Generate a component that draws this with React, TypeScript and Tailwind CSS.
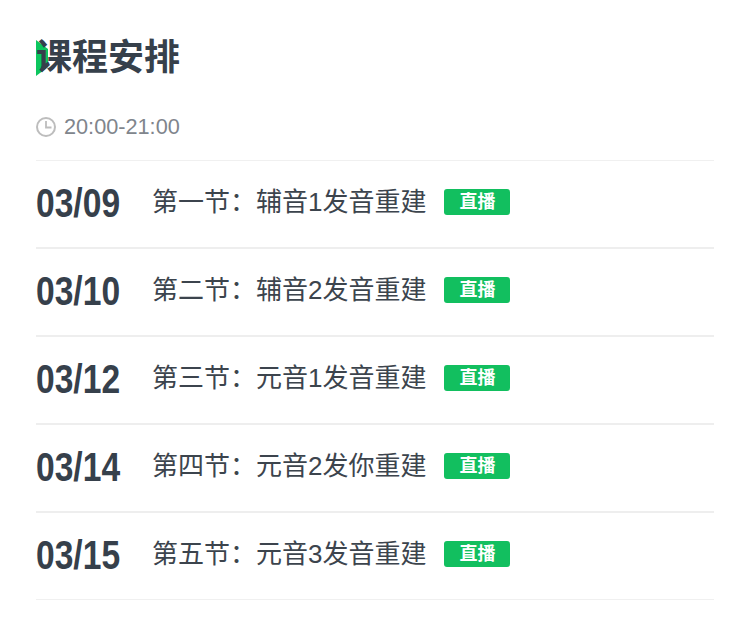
const rows = [
  ["03/09", "第一节：辅音1发音重建"],
  ["03/10", "第二节：辅音2发音重建"],
  ["03/12", "第三节：元音1发音重建"],
  ["03/14", "第四节：元音2发你重建"],
  ["03/15", "第五节：元音3发音重建"],
];
const font = { fontFamily: '"Liberation Sans", "Noto Sans CJK SC", sans-serif' };
export default function App() {
  return (
    <div className="w-[750px] h-[640px] bg-white pl-9 pr-9 pt-10 text-[#36404b]" style={font}>
      <div className="relative h-9 flex items-center">
        <svg className="absolute left-0 top-0" width="12" height="36" viewBox="0 0 12 36">
          <path d="M0 0 L12 9 V27 L0 36 Z" fill="#0cc65e" />
        </svg>
        <h1 className="relative text-[36px] leading-9 font-bold">课程安排</h1>
      </div>
      <div className="mt-[34px] h-[34px] flex items-center gap-2 text-[21.7px] text-[#80858c]">
        <svg width="20" height="20" viewBox="0 0 20 20" fill="none" stroke="#bdbdbd" strokeWidth="2">
          <circle cx="10" cy="10" r="9" />
          <path d="M10 4 V10.5 H15.5" strokeWidth="1.8" />
        </svg>
        <span>20:00-21:00</span>
      </div>
      <div className="border-t border-[#f0f0f0] mt-[16px]">
        {rows.map(([d, t]) => (
          <div key={d} className="h-[88px] last:h-[87px] flex items-center border-b-2 border-[#eeeeee] last:border-b last:border-[#f0f0f0]">
            <span className="mb-[2px] w-[116px] text-[40px] font-bold scale-x-[0.84] origin-left whitespace-nowrap">{d}</span>
            <span className="mb-1 text-[26px] text-[#3c444d] whitespace-nowrap">{t}</span>
            <span className="mb-1 ml-[18px] w-[66px] h-[26px] bg-[#12bf5f] rounded-[3px] text-white text-[18px] font-bold flex items-center justify-center">直播</span>
          </div>
        ))}
      </div>
    </div>
  );
}
